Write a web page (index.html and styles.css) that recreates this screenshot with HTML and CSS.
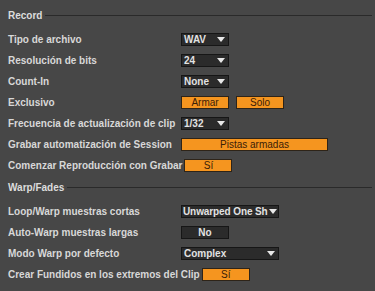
FILE: index.html
```html
<!DOCTYPE html>
<html>
<head>
<meta charset="utf-8">
<link rel="stylesheet" href="styles.css">
</head>
<body>
<div class="panel">
  <div class="heading"><span class="htext">Record</span><span class="hline"></span></div>
  <div class="rows">
    <div class="row"><span class="label">Tipo de archivo</span><span class="dd w48"><span class="dtext">WAV</span><span class="arrow"></span></span></div>
    <div class="row"><span class="label">Resolución de bits</span><span class="dd w48"><span class="dtext">24</span><span class="arrow"></span></span></div>
    <div class="row"><span class="label">Count-In</span><span class="dd w48"><span class="dtext">None</span><span class="arrow"></span></span></div>
    <div class="row"><span class="label">Exclusivo</span><span class="btn on w48">Armar</span><span class="btn on w48 ml7">Solo</span></div>
    <div class="row"><span class="label">Frecuencia de actualización de clip</span><span class="dd w48"><span class="dtext">1/32</span><span class="arrow"></span></span></div>
    <div class="row"><span class="label">Grabar automatización de Session</span><span class="btn on w147">Pistas armadas</span></div>
    <div class="row"><span class="label">Comenzar Reproducción con Grabar</span><span class="btn on w48">Sí</span></div>
  </div>
  <div class="heading h2"><span class="htext">Warp/Fades</span><span class="hline"></span></div>
  <div class="rows">
    <div class="row"><span class="label">Loop/Warp muestras cortas</span><span class="dd w98"><span class="dtext tight">Unwarped One Sh</span><span class="arrow snug"></span></span></div>
    <div class="row"><span class="label">Auto-Warp muestras largas</span><span class="btn off w48">No</span></div>
    <div class="row"><span class="label">Modo Warp por defecto</span><span class="dd w98"><span class="dtext">Complex</span><span class="arrow"></span></span></div>
    <div class="row"><span class="label">Crear Fundidos en los extremos del Clip</span><span class="btn on w48">Sí</span></div>
  </div>
</div>
</body>
</html>
```
FILE: styles.css
```css
html, body {
  margin: 0;
  padding: 0;
  background: #474747;
}
body {
  width: 375px;
  height: 291px;
  overflow: hidden;
  font-family: "Liberation Sans", Arial, sans-serif;
  font-size: 10px;
  font-weight: bold;
  color: #d8d8d8;
}
.panel {
  padding: 5px 3px 0 8px;
}
.heading {
  height: 20px;
  display: flex;
  align-items: center;
}
.h2 {
  margin-top: 1px;
}
.htext {
  color: #dcdcdc;
  white-space: nowrap;
}
.hline {
  flex: 1;
  height: 0;
  border-top: 1px solid #2a2a2a;
  margin-left: 3px;
}
.rows {
  margin-top: 4px;
}
.row {
  height: 21px;
  display: flex;
  align-items: center;
}
.label {
  min-width: 171px;
  margin-right: 2px;
  white-space: nowrap;
}
.dd {
  height: 13px;
  box-sizing: border-box;
  background: #2b2b2b;
  border: 1px solid #161616;
  display: flex;
  align-items: center;
  color: #e2e2e2;
}
.dtext {
  padding-left: 2px;
  flex: 1;
  white-space: nowrap;
  overflow: hidden;
  line-height: 11px;
}
.tight {
  padding-left: 1px;
  letter-spacing: -0.1px;
  overflow: visible;
}
.arrow {
  flex: none;
  width: 0;
  height: 0;
  border-left: 4px solid transparent;
  border-right: 4px solid transparent;
  border-top: 5px solid #e8e8e8;
  margin-right: 3px;
  margin-left: 1px;
}
.snug {
  margin-right: 1px;
  margin-left: 0;
}
.btn {
  height: 13px;
  box-sizing: border-box;
  display: flex;
  align-items: center;
  justify-content: center;
  border: 1px solid #2e2418;
  line-height: 11px;
  font-weight: normal;
}
.on {
  background: #f5951f;
  color: #3a2008;
}
.off {
  background: #2b2b2b;
  border-color: #161616;
  color: #e2e2e2;
  font-weight: bold;
}
.w48 { width: 48px; }
.w98 { width: 98px; }
.w147 { width: 147px; }
.ml7 { margin-left: 7px; }
```
